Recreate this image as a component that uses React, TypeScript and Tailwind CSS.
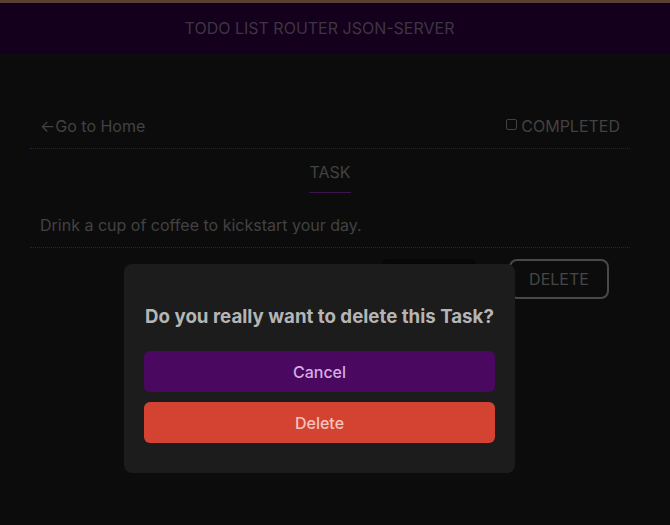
import React from "react";

export default function App() {
  return (
    <div className="relative w-[670px] h-[525px] overflow-hidden bg-[#0c0c0c]" style={{ fontFamily: "Inter, 'Noto Sans', sans-serif" }}>
      <div className="h-[3px] bg-[#5a4032]" />
      <header className="h-[50px] bg-[#14001c] flex items-center justify-center">
        <span className="text-[16px] text-[#3d3542] -ml-[31px]">TODO LIST ROUTER JSON-SERVER</span>
      </header>
      <main className="w-[600px] ml-[30px] mt-[58px]">
        <div className="flex items-center justify-between px-[10px] pt-[3px] pb-[10px] leading-[24px] border-b border-dotted border-[#3d1450]">
          <span className="text-[16px] text-[#424242] flex items-center">
            <span className="text-[16px]">←</span>Go to Home
          </span>
          <label className="flex items-center text-[16px] text-[#424242]">
            <span className="inline-block w-[11px] h-[11px] border border-[#424242] rounded-[2px] mr-[4px] -mt-[4px]" />
            COMPLETED
          </label>
        </div>
        <div className="flex justify-center pt-[11px]">
          <span className="text-[16px] text-[#424242] pb-[8px] border-b border-[#3d1450]">TASK</span>
        </div>
        <div className="px-[10px] pt-[20px] pb-[10px] leading-[24px] text-[16px] text-[#424242] border-b border-dotted border-[#3d1450]">
          Drink a cup of coffee to kickstart your day.
        </div>
        <div className="flex justify-end gap-[32px] pr-[21px] pt-[11px]">
          <button className="w-[96px] h-[40px] rounded-[8px] bg-[#070707] text-[16px] text-[#3f3f3f]">EDIT</button>
          <button className="w-[100px] h-[40px] rounded-[8px] border-2 border-[#494949] text-[16px] text-[#464646]">DELETE</button>
        </div>
      </main>
      <div className="absolute left-[124px] top-[264px] w-[391px] h-[209px] rounded-[8px] bg-[#1c1c1c] px-[20px] pt-[40px]">
        <h2 className="text-[18.7px] font-bold text-[#b5b5b5] text-center leading-[26px] whitespace-nowrap">Do you really want to delete this Task?</h2>
        <button className="mt-[21px] w-full h-[41px] rounded-[6px] bg-[#4b0860] text-[16px] font-medium text-[#d4aee0]">Cancel</button>
        <button className="mt-[10px] w-full h-[41px] rounded-[6px] bg-[#d44332] text-[16px] font-medium text-[#f3c4bc]">Delete</button>
      </div>
    </div>
  );
}
